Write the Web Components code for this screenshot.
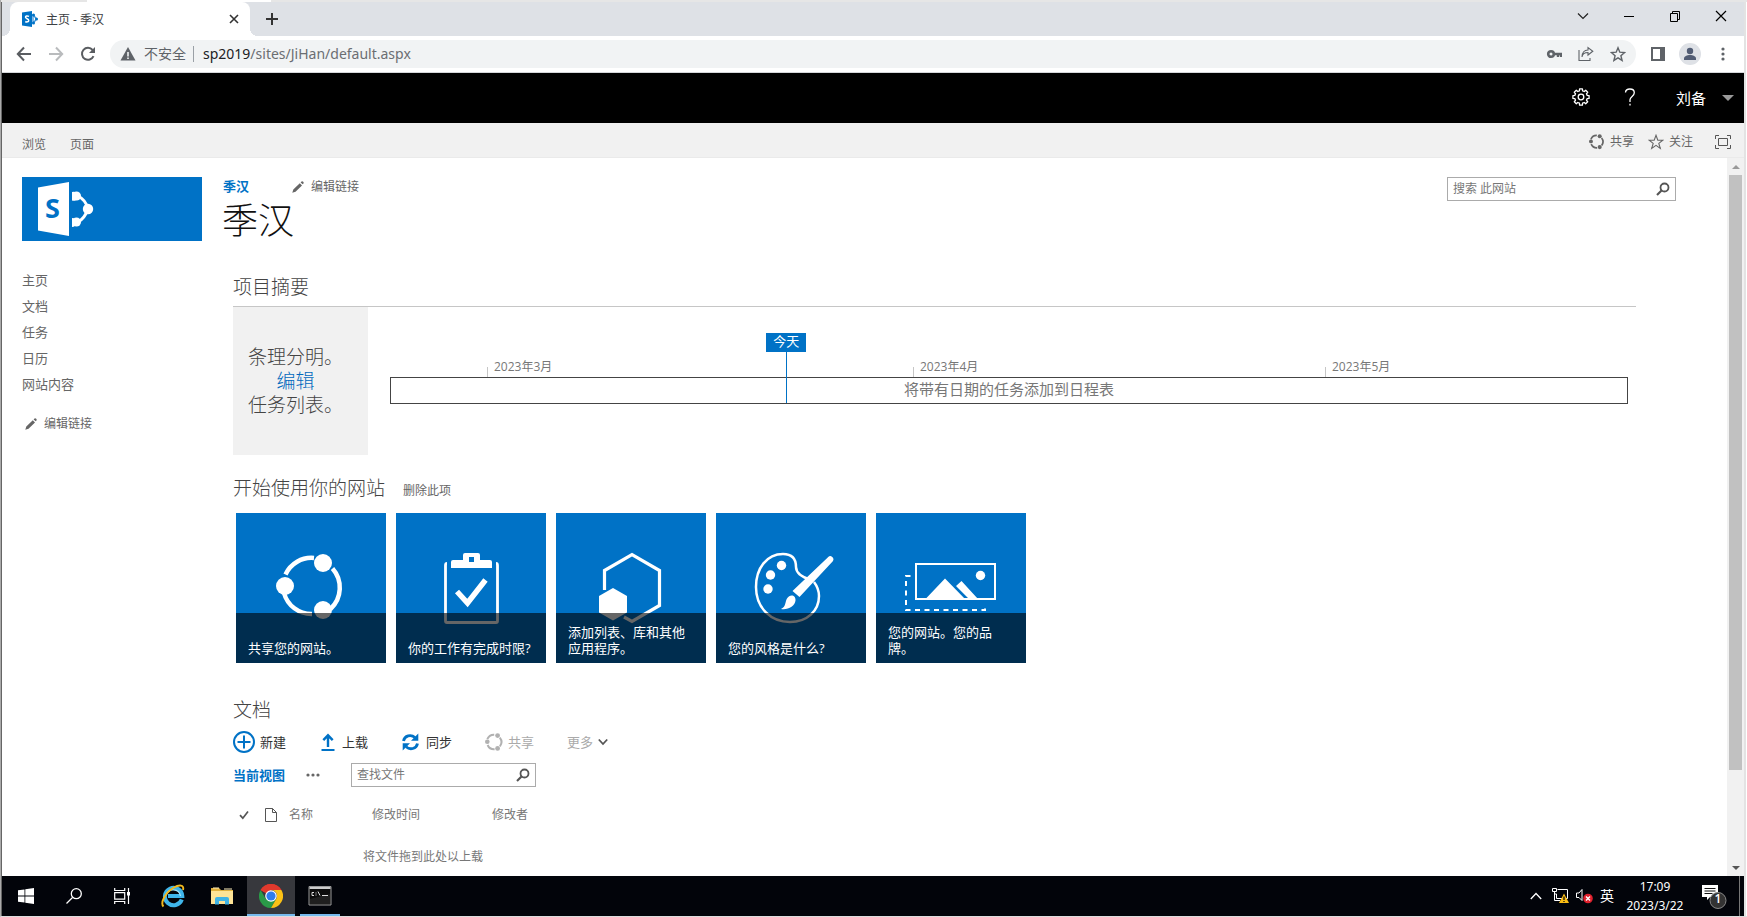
<!DOCTYPE html>
<html lang="zh-CN">
<head>
<meta charset="utf-8">
<title>主页 - 季汉</title>
<style>
html, body { margin: 0; height: 100%; }
body { font-family: "Open Sans", "Noto Sans CJK SC", sans-serif; font-size: 12px; color: #666; overflow: hidden; background: #fff; }
</style>
</head>
<body>
<desktop-window></desktop-window>
<script>
const define = (name, html, setup) => {
  const tpl = document.createElement('template');
  tpl.innerHTML = `<style>
    * { box-sizing: border-box; }
    button, input { font: inherit; color: inherit; background: none; border: 0; margin: 0; padding: 0; }
    a { color: inherit; text-decoration: none; }
    h1, h2, ul { margin: 0; padding: 0; list-style: none; }
    h1, h2 { font-weight: 300; }
  </style>` + html;
  customElements.define(name, class extends HTMLElement {
    constructor() {
      super();
      this.attachShadow({ mode: 'open' }).append(tpl.content.cloneNode(true));
    }
    connectedCallback() { if (setup) setup(this, this.shadowRoot); }
  });
};

/* Outline of an eight-toothed gear centred on (9,9). */
const gear = () => {
  const pts = [];
  for (let i = 0; i < 8; i++) {
    [[-14, 6.4], [-10, 8.2], [10, 8.2], [14, 6.4]].forEach(([d, r]) => {
      const a = (i * 45 + d) * Math.PI / 180;
      pts.push((9 + r * Math.cos(a)).toFixed(2) + ' ' + (9 + r * Math.sin(a)).toFixed(2));
    });
  }
  return 'M' + pts.join('L') + 'Z';
};

const loop = c => `<g fill="none" stroke="${c}" stroke-width="2"><path d="M2.300 6.200A7.200 7.200 0 0 1 9.200 1.700M14.800 4.600A7.200 7.200 0 0 1 14.900 13.400M9.600 16.300A7.200 7.200 0 0 1 2.600 12"/></g><g fill="${c}"><circle cx="2.300" cy="8.700" r="2.300"/><circle cx="12.600" cy="2.600" r="2.400"/><circle cx="12.600" cy="15.400" r="2.400"/></g>`;

const ICONS = {
  favicon: [16, 16, `<path fill="#0072c6" d="M0 1.500 10 0v16L0 14.500z"/><path d="M11 3.500 14.500 8 11 12.500M11 3.500v9" fill="none" stroke="#3c93d8" stroke-width="1.300"/><circle cx="11.500" cy="4" r="1.500" fill="#0072c6"/><circle cx="11.500" cy="12" r="1.500" fill="#0072c6"/><circle cx="14.500" cy="8" r="1.500" fill="#0072c6"/><path d="M7 5.400C5 4.400 3.400 5 3.500 6.300c.1 1.600 3.200 1.300 3.200 3.100 0 1.600-2 1.900-3.400 1.100" fill="none" stroke="#fff" stroke-width="1.500"/>`],
  tabclose: [10, 10, `<path d="M1 1l8 8M9 1 1 9" stroke="#333" stroke-width="1.600"/>`],
  plus: [12, 12, `<path d="M6 0v12M0 6h12" stroke="#333" stroke-width="2"/>`],
  chev: [12, 12, `<path d="M1 3.500l5 5 5-5" fill="none" stroke="#222" stroke-width="1.200"/>`],
  min: [12, 12, `<path d="M1 6.500h10" stroke="#000"/>`],
  restore: [12, 12, `<path d="M1.500 3.500h7v8h-7zM3.500 3.500v-2h7v8h-2" fill="none" stroke="#000"/>`],
  close: [12, 12, `<path d="M1 1l10 10M11 1 1 11" stroke="#000" stroke-width="1.200"/>`],
  back: [16, 16, `<path d="M15 8H2M8 1.500 1.800 8 8 14.500" fill="none" stroke="#5a5d61" stroke-width="2"/>`],
  fwd: [16, 16, `<path d="M1 8h13M8 1.500 14.200 8 8 14.500" fill="none" stroke="#b9bbbd" stroke-width="2"/>`],
  reload: [16, 16, `<path d="M13.500 10.200A6 6 0 1 1 12.600 4" fill="none" stroke="#5a5d61" stroke-width="2"/><path d="M15 1v6H9z" fill="#5a5d61"/>`],
  warn: [16, 14, `<path d="M8 0l7.500 13.500H.5z" fill="#5f6368"/><path d="M8 5v4.500M8 10.500v1.500" stroke="#f1f3f4" stroke-width="1.600"/>`],
  key: [16, 16, `<circle cx="5" cy="8" r="2.800" fill="none" stroke="#5f6368" stroke-width="2.600"/><path d="M8 8h7v3M12 8v3" fill="none" stroke="#5f6368" stroke-width="2.400"/>`],
  shareout: [16, 16, `<path d="M1 4v10.500h11V12M4 11c.5-3.500 3-4.500 6-4.500V9l4.800-3.800L10 1.500V4c-3.500 0-5.800 2.500-6 7z" fill="none" stroke="#5f6368" stroke-width="1.100"/>`],
  bookmark: [16, 16, `<path d="M8 1.800l1.800 4.400 4.800.4-3.700 3.100 1.200 4.700L8 11.900l-4.100 2.500 1.200-4.700L1.400 6.600l4.800-.4z" fill="none" stroke="#5f6368" stroke-width="1.400"/>`],
  panel: [14, 14, `<path d="M1 1h12v12H1z" fill="#fff" stroke="#5f6368" stroke-width="2"/><path d="M9 1h4v12H9z" fill="#5f6368"/>`],
  avatar: [22, 22, `<circle cx="11" cy="11" r="11" fill="#dee1e6"/><circle cx="11" cy="8" r="3.200" fill="#515c74"/><path d="M5 17v-1.500c0-2.300 3-3.500 6-3.500s6 1.200 6 3.500V17z" fill="#515c74"/>`],
  kebab: [4, 14, `<g fill="#5f6368"><circle cx="2" cy="2" r="1.600"/><circle cx="2" cy="7" r="1.600"/><circle cx="2" cy="12" r="1.600"/></g>`],
  gear: [18, 18, `<path d="${gear()}" fill="none" stroke="#fff" stroke-width="1.300" stroke-linejoin="round"/><circle cx="9" cy="9" r="2.800" fill="none" stroke="#fff" stroke-width="1.300"/>`],
  help: [12, 18, `<path d="M1.500 4.500C1.500 2.200 3.300 1 5.800 1s4.500 1.400 4.500 3.800c0 3.600-4.300 3.700-4.300 7V14M6 15.800v1.700" fill="none" stroke="#fff" stroke-width="1.300"/>`],
  caret: [12, 6, `<path d="M0 0h12L6 6z" fill="#999"/>`],
  loop: [16, 16, `<g transform="scale(.85)">${loop('#666')}</g>`],
  loopoff: [18, 18, loop('#b1b1b1')],
  star: [16, 16, `<path d="M8 1.300l1.800 4.900h5.100l-4.100 3.200 1.500 5L8 11.400l-4.300 3 1.500-5L1.100 6.200h5.100z" fill="none" stroke="#666" stroke-width="1.100"/>`],
  focus: [16, 14, `<path d="M.5 4V.5H4M12 .5h3.500V4M15.500 10v3.500H12M4 13.500H.5V10M3.500 3.500h9v7h-9z" fill="none" stroke="#555"/>`],
  glass: [14, 14, `<circle cx="8.500" cy="5.500" r="4" fill="none" stroke="#555" stroke-width="1.800"/><path d="M5.500 8.500 1 13" stroke="#555" stroke-width="2.200"/>`],
  pencil: [12, 12, `<path d="M.3 11.700l1-3.200 6.500-6.300 2.200 2.200-6.500 6.300zM8.600 1.500l1-1c.9-.8 2.700.8 1.900 1.900l-.8.900z" fill="#666"/>`],
  logo: [60, 56, `<path d="M0 6.500 31 1v54L0 49.500z" fill="#fff"/><path d="M40 15q8 4 10 13-3 9-10 13" fill="none" stroke="#fff" stroke-width="3"/><path d="M34 11a4.500 4.500 0 1 1 0 8.500zM34 46a4.500 4.500 0 1 0 0-9z" fill="#fff"/><circle cx="38.500" cy="15" r="4.500" fill="#fff"/><circle cx="38.500" cy="41" r="4.500" fill="#fff"/><circle cx="50" cy="28" r="5.200" fill="#fff"/><text x="7" y="37" font-family="Open Sans" font-weight="700" font-size="27" fill="#0072c6">S</text>`],
  circplus: [22, 22, `<circle cx="11" cy="11" r="10" fill="none" stroke="#0072c6" stroke-width="2"/><path d="M11 4.500v13M4.500 11h13" stroke="#0072c6" stroke-width="2"/>`],
  upload: [18, 18, `<path d="M9 14V3M4.300 7.200 9 2.300l4.700 4.900" fill="none" stroke="#0072c6" stroke-width="2.400"/><path d="M2.500 17h13" stroke="#0072c6" stroke-width="2"/>`],
  sync: [20, 18, `<path d="M2.500 8C3.500 2.500 10 1.200 14 4.500M16.500 10.500C15.500 16 9 17.200 5 13.800" fill="none" stroke="#0072c6" stroke-width="2.800"/><path d="M17.300.500v7.300H10zM1.700 17.500v-7.300H9z" fill="#0072c6"/>`],
  chevsm: [10, 8, `<path d="M.8 1.500 5 6l4.200-4.500" fill="none" stroke="#555" stroke-width="1.800"/>`],
  dots: [14, 4, `<g fill="#666"><circle cx="2" cy="2" r="1.600"/><circle cx="7" cy="2" r="1.600"/><circle cx="12" cy="2" r="1.600"/></g>`],
  check: [10, 10, `<path d="M1 5.200l2.800 3L9 1.500" fill="none" stroke="#555" stroke-width="1.700"/>`],
  doc: [12, 16, `<path d="M.5 1.500h7l4 4v9H.5zM7.500 1.500v4h4" fill="none" stroke="#555"/>`],
  up: [12, 6, `<path d="M2 6 6 2l4 4z" fill="#999"/>`],
  down: [12, 6, `<path d="M2 0h8L6 4z" fill="#555"/>`],
  share: [150, 150, `<g fill="none" stroke="#fff" stroke-width="4.500"><path d="M49.500 61.500A28.500 28.500 0 0 1 78 45M96.500 55.500A29 29 0 0 1 94.500 96M76 101A28.500 28.500 0 0 1 48 80"/></g><g fill="#fff"><circle cx="49" cy="73" r="9"/><circle cx="87" cy="50" r="9"/><circle cx="87" cy="97" r="9"/></g>`],
  clip: [150, 150, `<path d="M51 50.500q-1.500 0-1.500 2v55.500q0 1.500 1.500 1.500h49q1.500 0 1.500-1.500V52.500q0-2-1.500-2" fill="none" stroke="#fff" stroke-width="2.800"/><path fill-rule="evenodd" fill="#fff" d="M55 55v-6q0-2 2-2h10v-5q0-2 2-2h13q2 0 2 2v5h10q2 0 2 2v6zM73 44v5h5v-5z"/><path d="M61 78.500 71.500 90 89.500 67" fill="none" stroke="#fff" stroke-width="5.500"/>`],
  hex: [150, 150, `<path d="M48.500 77V57.500L76 41.700l27.500 15.800v35L76 108.300 68 104" fill="none" stroke="#fff" stroke-width="3.200"/><path d="M57 75l14 8v16.500l-14 8-14-8V83z" fill="#fff"/>`],
  palette: [150, 150, `<path d="M95 67c-8-2.500-15-6-15-13 0-9-5-13-13-13-16 0-27 14-27 33 0 21 15 35 34 35 17 0 29-11 29-26 0-6-2-10-5-14" fill="none" stroke="#fff" stroke-width="2.500"/><g fill="#fff"><circle cx="65.500" cy="52.500" r="4.700"/><circle cx="54.500" cy="62" r="4.700"/><circle cx="52" cy="76" r="4.700"/><path d="M76.500 78 112 44.200q2-2 4-.5 2.500 2 .8 4.500L83.500 84zM65 96c5-2 4-7 6-10.500 3-5 9-3.500 8.500 2C79 93 71.500 97.500 65 96z"/></g>`],
  brand: [150, 150, `<path d="M40 51h79v35H40z" fill="none" stroke="#fff" stroke-width="2"/><g fill="#fff"><path d="M49.500 86 69 65.500 89 86zM80 73l5.500-5L102 86h-9z"/><circle cx="104.500" cy="62.500" r="4.700"/></g><path d="M34.500 63H30v34h79v-5" fill="none" stroke="#fff" stroke-width="2" stroke-dasharray="5 4.500"/>`],
  win: [16, 16, `<path fill="#fff" d="M0 2.300 6.500 1.400v6.200H0zM7.300 1.300 16 0v7.600H7.300zM0 8.400h6.500v6.200L0 13.700zM7.300 8.400H16V16l-8.700-1.200z"/>`],
  tbsearch: [16, 16, `<circle cx="10.300" cy="5.700" r="5" fill="none" stroke="#fff" stroke-width="1.300"/><path d="M6.500 9.500.5 15.500" stroke="#fff" stroke-width="1.300"/>`],
  taskview: [16, 16, `<path d="M.7 0v2.500h10V0M.7 4.700h10v6.500H.7zM.7 16v-2.500h10V16M14.500 0v16" fill="none" stroke="#fff" stroke-width="1.200"/><path d="M13 4h3v3.500h-3z" fill="#fff"/>`],
  ie: [24, 24, `<path d="M20.800 15.500A8.700 8.700 0 1 1 21.300 12H7" fill="none" stroke="#3fb5ea" stroke-width="4"/><path d="M19.500 12A7.500 7.500 0 0 0 5 11" fill="none" stroke="#a5e4fb" stroke-width="1.300"/><path d="M2.500 22.500C-1 19 4 9 12.500 3.800 18 .5 23.500.5 22 6" fill="none" stroke="#f2b91e" stroke-width="1.900"/>`],
  explorer: [22, 20, `<path d="M0 2h8l2 2h12v14H0z" fill="#e0b13e"/><path d="M0 5h22v13H0z" fill="#fde397"/><path d="M2 2h6M13 3h8" stroke="#fff0bd"/><path d="M4 18.500V13q0-2 2-2h10q2 0 2 2v5.500h-4V15H8v3.500z" fill="#3fb3e6"/>`],
  chrome: [24, 24, `<path d="M12 12 1.600 6A12 12 0 0 1 22.400 6H12z" fill="#e0392d"/><path d="M12 12 6.800 15 1.600 6A12 12 0 0 0 12 24l5.200-9z" fill="#2a9a48"/><path d="M12 6h10.400A12 12 0 0 1 12 24l5.200-9A6 6 0 0 0 12 6z" fill="#fbc116"/><path d="M1.600 6A12 12 0 0 1 22.400 6H12a6 6 0 0 0-5.200 3z" fill="#e0392d"/><circle cx="12" cy="12" r="5.800" fill="#fff"/><circle cx="12" cy="12" r="4.600" fill="#2f7cec"/>`],
  cmd: [24, 20, `<path d="M1 .5h22v18.500H1z" fill="#0c0c0c" stroke="#999"/><path d="M1.500 1h21v2h-21z" fill="#ccc"/><path d="M6 6.500H4v3h2M8 6.500v1M8 8.500v1M10 5.500l2 4M14 9.500h6" fill="none" stroke="#ddd"/><path d="M2 13 22 8v10H2z" fill="#fff" opacity=".08"/>`],
  trayup: [12, 8, `<path d="M.8 7 6 1.500 11.200 7" fill="none" stroke="#fff" stroke-width="1.300"/>`],
  net: [18, 16, `<path d="M5.500 1.500h10v9H4.500V6M.5.500h4v3h-4zM2.500 3.500v9H8M4.500 6H3" fill="none" stroke="#fff"/><path d="M12 5.500l5 9.500H7z" fill="#fbbd13"/><path d="M12 8.500v3.500M12 13v1" stroke="#111" stroke-width="1.300"/>`],
  vol: [18, 16, `<path d="M.5 5h2.500L6 1.500v11L3 9.500H.5z" fill="none" stroke="#fff"/><circle cx="12" cy="10.500" r="4.800" fill="#e0202c"/><path d="M10 8.500l4 4M14 8.500l-4 4" stroke="#fff" stroke-width="1.400"/>`],
  notif: [26, 26, `<path d="M1 2h16v12H9l-3 3v-3H1z" fill="#fff"/><path d="M3.500 5.500h11M3.500 8h11M3.500 10.500h8" stroke="#111"/><circle cx="17" cy="17.500" r="8" fill="#333" stroke="#888"/>`]
};

customElements.define('ui-icon', class extends HTMLElement {
  constructor() { super(); this.attachShadow({ mode: 'open' }); }
  connectedCallback() {
    const [w, h, body] = ICONS[this.getAttribute('name')];
    this.shadowRoot.innerHTML = `<style>:host{display:block;flex:none}svg{display:block}</style>
      <svg width="${w}" height="${h}" viewBox="0 0 ${w} ${h}" aria-hidden="true">${body}</svg>`;
  }
});

define('browser-tabs', `<style>
  :host { display: flex; align-items: center; height: 34px; background: #dee1e6; padding-left: 8px; }
  .tab { position: relative; display: flex; align-items: center; width: 240px; height: 34px; padding: 0 11px 0 12px; gap: 8px; background: #fff; border-radius: 8px 8px 0 0; color: #3c4043; line-height: 16px; }
  .tab::before, .tab::after { content: ""; position: absolute; bottom: 0; width: 8px; height: 8px; }
  .tab::before { right: 100%; background: radial-gradient(circle at 0 0, #dee1e6 8px, #fff 8px); }
  .tab::after { left: 100%; background: radial-gradient(circle at 100% 0, #dee1e6 8px, #fff 8px); }
  .title { flex: 1; padding-top: 2px; }
  .new { margin-left: 16px; }
  .controls { display: flex; gap: 34px; margin-left: auto; padding: 0 17px 6px 0; }
</style>
<div class="tab"><ui-icon name="favicon"></ui-icon><span class="title">主页 - 季汉</span><button aria-label="关闭标签页"><ui-icon name="tabclose"></ui-icon></button></div>
<button class="new" aria-label="新标签页"><ui-icon name="plus"></ui-icon></button>
<div class="controls">
  <button aria-label="搜索标签页"><ui-icon name="chev"></ui-icon></button>
  <button aria-label="最小化"><ui-icon name="min"></ui-icon></button>
  <button aria-label="还原"><ui-icon name="restore"></ui-icon></button>
  <button aria-label="关闭"><ui-icon name="close"></ui-icon></button>
</div>`);

define('browser-toolbar', `<style>
  :host { display: flex; align-items: center; height: 37px; background: #fff; border-bottom: 1px solid #d5d7da; padding: 0 19px 0 14px; }
  .nav { display: flex; gap: 16px; padding-right: 14px; }
  .bar { flex: 1; display: flex; align-items: center; height: 28px; border-radius: 14px; background: #f1f3f4; padding: 0 10px; font-size: 14px; line-height: 20px; }
  .warn { color: #5f6368; padding: 0 7px 0 8px; border-right: 1px solid #9aa0a6; line-height: 16px; }
  .url { flex: 1; padding-left: 9px; color: #6b6e72; font-family: "Noto Sans", sans-serif; }
  .url b { font-weight: 400; color: #202124; }
  .acts { display: flex; gap: 16px; align-items: center; }
  .right { display: flex; align-items: center; gap: 14px; padding-left: 15px; }
  .right button:last-child { margin-left: 6px; }
</style>
<div class="nav">
  <button aria-label="后退"><ui-icon name="back"></ui-icon></button>
  <button aria-label="前进"><ui-icon name="fwd"></ui-icon></button>
  <button aria-label="重新加载"><ui-icon name="reload"></ui-icon></button>
</div>
<div class="bar"><ui-icon name="warn"></ui-icon><span class="warn">不安全</span>
  <span class="url"><b>sp2019</b>/sites/JiHan/default.aspx</span>
  <div class="acts">
    <button aria-label="密码"><ui-icon name="key"></ui-icon></button>
    <button aria-label="分享"><ui-icon name="shareout"></ui-icon></button>
    <button aria-label="添加书签"><ui-icon name="bookmark"></ui-icon></button>
  </div>
</div>
<div class="right">
  <button aria-label="侧边栏"><ui-icon name="panel"></ui-icon></button>
  <button aria-label="个人资料"><ui-icon name="avatar"></ui-icon></button>
  <button aria-label="菜单"><ui-icon name="kebab"></ui-icon></button>
</div>`);

define('suite-bar', `<style>
  :host { display: flex; justify-content: flex-end; align-items: center; height: 50px; background: #000; color: #fff; padding-right: 10px; }
  .tool { padding-bottom: 3px; }
  .help { margin: 0 40px 0 34px; }
  .user { display: flex; align-items: center; gap: 16px; font-size: 15px; line-height: 20px; }
</style>
<button class="tool" aria-label="设置"><ui-icon name="gear"></ui-icon></button>
<button class="tool help" aria-label="帮助"><ui-icon name="help"></ui-icon></button>
<button class="user">刘备<ui-icon name="caret"></ui-icon></button>`);

define('ribbon-bar', `<style>
  :host { display: flex; align-items: center; height: 35px; background: #f1f1f1; border-bottom: 1px solid #eaeaea; padding: 0 13px 0 20px; line-height: 16px; }
  nav { display: flex; gap: 24px; padding-top: 10px; }
  .acts { display: flex; align-items: center; margin-left: auto; padding-top: 3px; gap: 14px; }
  .acts button { display: flex; align-items: center; gap: 5px; }
  .acts button:last-child { margin-left: 8px; }
</style>
<nav><a href="#">浏览</a><a href="#">页面</a></nav>
<div class="acts">
  <button><ui-icon name="loop"></ui-icon>共享</button>
  <button><ui-icon name="star"></ui-icon>关注</button>
  <button aria-label="专注于内容"><ui-icon name="focus"></ui-icon></button>
</div>`);

define('search-box', `<style>
  :host { display: flex; align-items: center; height: 24px; border: 1px solid #ababab; padding: 0 5px; }
  input { flex: 1; min-width: 0; line-height: 16px; outline: 0; }
  input::placeholder { color: #777; opacity: 1; }
</style><input type="text"><button aria-label="搜索"><ui-icon name="glass"></ui-icon></button>`,
(el, root) => {
  const input = root.querySelector('input');
  input.placeholder = el.getAttribute('hint');
  input.setAttribute('aria-label', el.getAttribute('hint'));
});

define('edit-link', `<style>
  :host { display: block; }
  a { display: flex; align-items: center; gap: 7px; line-height: 20px; }
</style><a href="#"><ui-icon name="pencil"></ui-icon><slot></slot></a>`);

define('site-header', `<style>
  :host { display: flex; align-items: flex-start; padding: 19px 51px 0 20px; }
  .logo { display: block; width: 180px; height: 64px; padding: 4px 16px; background: #0072c6; }
  .names { flex: 1; padding-left: 20px; }
  .crumb { display: flex; gap: 43px; height: 18px; line-height: 18px; padding-left: 1px; }
  .crumb > a { font-size: 13px; font-weight: 700; color: #0072c6; }
  h1 { font-size: 36px; line-height: 48px; padding-top: 2px; color: #111; }
  search-box { width: 229px; }
</style>
<a class="logo" href="#" aria-label="SharePoint"><ui-icon name="logo"></ui-icon></a>
<div class="names">
  <div class="crumb"><a href="#">季汉</a><edit-link>编辑链接</edit-link></div>
  <h1>季汉</h1>
</div>
<search-box hint="搜索 此网站"></search-box>`);

define('quick-launch', `<style>
  :host { display: block; padding-top: 22px; font-size: 13px; line-height: 26px; }
  edit-link { font-size: 12px; padding: 17px 0 0 3px; }
</style>
<ul><li><a href="#">主页</a></li><li><a href="#">文档</a></li><li><a href="#">任务</a></li><li><a href="#">日历</a></li><li><a href="#">网站内容</a></li></ul>
<edit-link>编辑链接</edit-link>`);

define('project-summary', `<style>
  :host { display: block; }
  h2 { font-size: 19px; line-height: 24px; color: #444; padding-bottom: 7px; border-bottom: 1px solid #c6c6c6; }
  .row { display: flex; }
  .note { width: 135px; height: 148px; background: #f1f1f1; font-size: 19px; line-height: 24px; text-align: center; padding: 38px 25px 0 15px; font-weight: 300; white-space: nowrap; color: #444; }
  .note a { color: #0068bd; display: block; }
  .line { position: relative; flex: 1; margin: 50px 8px 0 22px; }
  .months { display: grid; grid-template-columns: 97fr 426fr 412fr 303fr; height: 20px; align-items: end; }
  .months span { height: 20px; line-height: 20px; padding-left: 7px; font-size: 12px; color: #777; background: linear-gradient(#c6c6c6, #c6c6c6) 0 100% / 1px 10px no-repeat; }
  .months span:first-child { background: none; }
  .track { height: 27px; border: 1px solid #444; font-size: 15px; line-height: 22px; text-align: center; color: #777; }
  .today { position: absolute; left: 32%; top: -24px; height: 70px; width: 1px; background: #0072c6; }
  .today span { position: absolute; left: -20px; top: 0; width: 40px; line-height: 16px; height: 19px; background: #0072c6; color: #fff; font-size: 13px; text-align: center; }
</style>
<h2>项目摘要</h2>
<div class="row">
  <div class="note">条理分明。<a href="#">编辑</a>任务列表。</div>
  <div class="line">
    <div class="months"><span></span><span>2023年3月</span><span>2023年4月</span><span>2023年5月</span></div>
    <div class="track">将带有日期的任务添加到日程表</div>
    <div class="today"><span>今天</span></div>
  </div>
</div>`);

define('start-tile', `<style>
  :host { display: block; width: 150px; height: 150px; position: relative; background: #0072c6; color: #fff; }
  .cap { position: absolute; left: 0; right: 0; bottom: 0; height: 50px; display: flex; align-items: flex-end; padding: 0 12px 7px; background: rgba(0,0,0,.6); font-size: 13px; line-height: 16px; }
</style><a href="#"><div class="art"></div><div class="cap"><span><slot></slot></span></div></a>`,
(el, root) => { root.querySelector('.art').innerHTML = `<ui-icon name="${el.getAttribute('art')}"></ui-icon>`; });

define('get-started', `<style>
  :host { display: block; padding-top: 21px; }
  header { display: flex; align-items: center; gap: 18px; }
  h2 { font-size: 19px; line-height: 24px; color: #444; }
  header a { padding-top: 5px; line-height: 16px; }
  .tiles { display: flex; gap: 10px; padding: 13px 0 0 3px; }
</style>
<header><h2>开始使用你的网站</h2><a href="#">删除此项</a></header>
<div class="tiles">
  <start-tile art="share">共享您的网站。</start-tile>
  <start-tile art="clip">你的工作有完成时限?</start-tile>
  <start-tile art="hex">添加列表、库和其他应用程序。</start-tile>
  <start-tile art="palette">您的风格是什么?</start-tile>
  <start-tile art="brand">您的网站。您的品牌。</start-tile>
</div>`);

define('document-library', `<style>
  :host { display: block; padding-top: 35px; }
  h2 { font-size: 19px; line-height: 24px; color: #444; }
  .cmds { display: flex; gap: 33px; margin-top: 8px; height: 24px; font-size: 13px; line-height: 24px; color: #333; }
  .cmds button { display: flex; align-items: center; gap: 5px; }
  .cmds .off { color: #aaa; }
  .views { display: flex; align-items: center; margin-top: 9px; }
  .views > a { font-size: 13px; font-weight: 700; color: #0072c6; line-height: 24px; }
  .dots { padding: 0 31px 0 21px; }
  search-box { width: 185px; }
  table { margin: 16px 0 0 6px; border-collapse: collapse; table-layout: fixed; width: 360px; line-height: 24px; color: #777; }
  th { padding: 0; height: 24px; text-align: left; font-weight: 400; }
  .c1 { width: 26px; } .c2 { width: 24px; } .c3 { width: 83px; } .c4 { width: 120px; }
  p { margin: 20px 0 0 130px; line-height: 20px; color: #777; }
</style>
<h2>文档</h2>
<div class="cmds">
  <button><ui-icon name="circplus"></ui-icon>新建</button>
  <button><ui-icon name="upload"></ui-icon>上载</button>
  <button><ui-icon name="sync"></ui-icon>同步</button>
  <button class="off"><ui-icon name="loopoff"></ui-icon>共享</button>
  <button class="off">更多<ui-icon name="chevsm"></ui-icon></button>
</div>
<div class="views"><a href="#">当前视图</a><button class="dots" aria-label="更多视图"><ui-icon name="dots"></ui-icon></button><search-box hint="查找文件"></search-box></div>
<table><thead><tr><th class="c1"><ui-icon name="check"></ui-icon></th><th class="c2"><ui-icon name="doc"></ui-icon></th><th class="c3">名称</th><th class="c4">修改时间</th><th>修改者</th></tr></thead></table>
<p>将文件拖到此处以上载</p>`);

define('page-scrollbar', `<style>
  :host { display: flex; flex-direction: column; align-items: center; width: 17px; background: #f1f1f1; padding: 5px 0 4px; }
  .rail { flex: 1; width: 13px; margin: 6px 0 7px; }
  .thumb { height: 87%; background: #c1c1c1; }
</style><ui-icon name="up"></ui-icon><div class="rail"><div class="thumb"></div></div><ui-icon name="down"></ui-icon>`);

define('site-page', `<style>
  :host { display: flex; flex: 1; min-height: 0; overflow: hidden; background: #fff; }
  .page { flex: 1; min-width: 0; overflow: hidden; }
  .cols { display: flex; padding: 0 91px 0 20px; }
  quick-launch { width: 211px; flex: none; }
  main { flex: 1; min-width: 0; padding-top: 30px; }
</style>
<div class="page">
  <site-header></site-header>
  <div class="cols">
    <quick-launch></quick-launch>
    <main><project-summary></project-summary><get-started></get-started><document-library></document-library></main>
  </div>
</div>
<page-scrollbar></page-scrollbar>`);

define('task-bar', `<style>
  :host { display: flex; height: 40px; flex: none; background: #02040a; color: #fff; }
  button { width: 48px; height: 40px; display: flex; align-items: center; justify-content: center; }
  .apps { display: flex; gap: 1px; margin-left: 3px; }
  .active { background: #37383d; box-shadow: inset 0 -2px #76b9ed; }
  .run { background: linear-gradient(#76b9ed, #76b9ed) 50% 100% / 40px 2px no-repeat; }
  .tray { display: flex; align-items: center; margin-left: auto; gap: 6px; }
  .tray > :first-child { margin-right: 4px; }
  .lang { font-size: 14px; line-height: 20px; }
  .clock { width: 70px; text-align: center; font-size: 12px; line-height: 19px; font-family: "Noto Sans", sans-serif; }
  .note { position: relative; width: 26px; margin: 0 6px 0 5px; }
  .note span { position: absolute; left: 9px; top: 15px; width: 16px; text-align: center; font-size: 12px; line-height: 16px; font-weight: 600; }
  .show { width: 5px; border-left: 1px solid #777; }
</style>
<button aria-label="开始"><ui-icon name="win"></ui-icon></button>
<button aria-label="搜索"><ui-icon name="tbsearch"></ui-icon></button>
<button aria-label="任务视图"><ui-icon name="taskview"></ui-icon></button>
<div class="apps">
  <button aria-label="Internet Explorer"><ui-icon name="ie"></ui-icon></button>
  <button aria-label="文件资源管理器"><ui-icon name="explorer"></ui-icon></button>
  <button class="active" aria-label="Google Chrome"><ui-icon name="chrome"></ui-icon></button>
  <button class="run" aria-label="命令提示符"><ui-icon name="cmd"></ui-icon></button>
</div>
<div class="tray">
  <ui-icon name="trayup"></ui-icon><ui-icon name="net"></ui-icon><ui-icon name="vol"></ui-icon>
  <span class="lang">英</span>
  <div class="clock">17:09<br>2023/3/22</div>
  <button class="note" aria-label="通知"><ui-icon name="notif"></ui-icon><span>1</span></button>
  <button class="show" aria-label="显示桌面"></button>
</div>`);

define('desktop-window', `<style>
  :host { display: flex; flex-direction: column; box-sizing: border-box; height: 100vh; background: #fff; border-left: 1px solid #aaa; border-bottom: 1px solid #ddd; }
  .edge { height: 2px; flex: none; background: linear-gradient(#fff, #fff) 86px 0 / 184px 2px no-repeat #e6e6e6; }
  .frame { flex: 1; min-height: 0; display: flex; flex-direction: column; border-left: 1px solid #666; margin-right: 1px; border-right: 2px solid #e3e3e3; }
  .frame > * { flex-shrink: 0; }
  .frame > site-page { flex-shrink: 1; }
</style>
<div class="edge"></div>
<div class="frame">
  <browser-tabs></browser-tabs><browser-toolbar></browser-toolbar><suite-bar></suite-bar><ribbon-bar></ribbon-bar>
  <site-page></site-page>
  <task-bar></task-bar>
</div>`);
</script>
</body>
</html>
